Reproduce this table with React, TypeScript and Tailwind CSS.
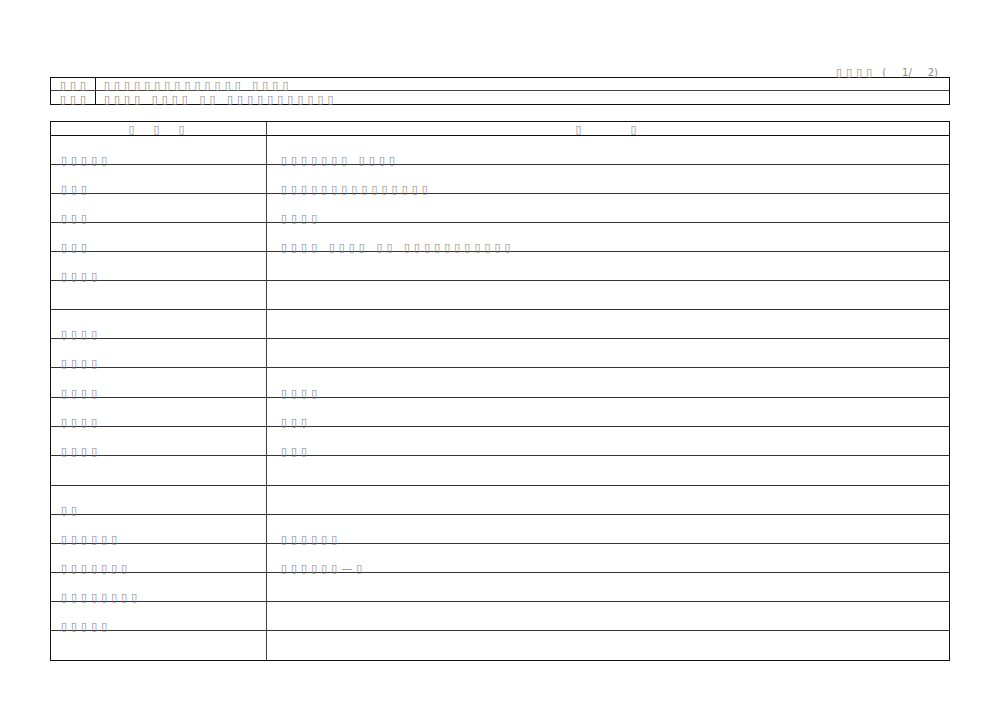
import React from "react";

// tofu-like text, as the original document renders
const Tf = ({ t, className = "" }: { t: string; className?: string }) => (
  <span
    className={"whitespace-pre text-[11px] leading-none tracking-[4px] text-[#8a8a8a] " + className}
    style={{ fontFamily: '"DejaVu Sans", sans-serif' }}
  >
    {t}
  </span>
);

const rows: { h: string; l: string; r: string }[] = [
  { h: "h-[29px]", l: "▯▯▯▯▯", r: "▯▯▯▯▯▯▯ ▯▯▯▯" },
  { h: "h-[29px]", l: "▯▯▯", r: "▯▯▯▯▯▯▯▯▯▯▯▯▯▯▯" },
  { h: "h-[29px]", l: "▯▯▯", r: "▯▯▯▯" },
  { h: "h-[29px]", l: "▯▯▯", r: "▯▯▯▯ ▯▯▯▯ ▯▯ ▯▯▯▯▯▯▯▯▯▯▯" },
  { h: "h-[29px]", l: "▯▯▯▯", r: "" },
  { h: "h-[29px]", l: "", r: "" },
  { h: "h-[29px]", l: "▯▯▯▯", r: "" },
  { h: "h-[29px]", l: "▯▯▯▯", r: "" },
  { h: "h-[30px]", l: "▯▯▯▯", r: "▯▯▯▯" },
  { h: "h-[29px]", l: "▯▯▯▯", r: "▯▯▯" },
  { h: "h-[29px]", l: "▯▯▯▯", r: "▯▯▯" },
  { h: "h-[30px]", l: "", r: "" },
  { h: "h-[29px]", l: "▯▯", r: "" },
  { h: "h-[29px]", l: "▯▯▯▯▯▯", r: "▯▯▯▯▯▯" },
  { h: "h-[29px]", l: "▯▯▯▯▯▯▯", r: "▯▯▯▯▯▯—▯" },
  { h: "h-[29px]", l: "▯▯▯▯▯▯▯▯", r: "" },
  { h: "h-[29px]", l: "▯▯▯▯▯", r: "" },
  { h: "h-[29px]", l: "", r: "" },
];

export default function App() {
  return (
    <div className="w-[1000px] h-[707px] bg-white relative">
      <div className="pt-[66px] px-[50px]">
        {/* page counter */}
        <div className="flex justify-end pr-[12px] h-[11px] items-end">
          <Tf t="▯▯▯▯" className="-mb-[1px]" />
          <span
            className="whitespace-pre text-[10px] leading-none text-[#8a8a8a] -mb-[1px] ml-[6px]"
            style={{ fontFamily: '"DejaVu Sans", sans-serif' }}
          >
            {"(     1/     2)"}
          </span>
        </div>

        {/* title block */}
        <div className="border border-[#111] w-[900px]">
          <div className="flex h-[13px] border-b border-[#444]">
            <div className="w-[45px] border-r border-[#111] pl-[9px] flex items-end">
              <Tf t="▯▯▯" className="-mb-[1px]" />
            </div>
            <div className="flex-1 pl-[8px] flex items-end">
              <Tf t="▯▯▯▯▯▯▯▯▯▯▯▯▯▯ ▯▯▯▯" className="-mb-[1px]" />
            </div>
          </div>
          <div className="flex h-[13px]">
            <div className="w-[45px] border-r border-[#111] pl-[9px] flex items-end">
              <Tf t="▯▯▯" className="-mb-[1px]" />
            </div>
            <div className="flex-1 pl-[8px] flex items-end">
              <Tf t="▯▯▯▯ ▯▯▯▯ ▯▯ ▯▯▯▯▯▯▯▯▯▯▯" className="-mb-[1px]" />
            </div>
          </div>
        </div>

        {/* main table */}
        <div className="mt-[16px] border border-[#111] w-[900px]">
          <div className="flex h-[14px] border-b border-[#111]">
            <div className="w-[216px] border-r border-[#444] flex items-end justify-center">
              <Tf t="▯  ▯  ▯" />
            </div>
            <div className="flex-1 flex items-end justify-center">
              <Tf t="▯      ▯" />
            </div>
          </div>
          {rows.map((r, i) => (
            <div
              key={i}
              className={
                "flex " + r.h + (i < rows.length - 1 ? " border-b border-[#333]" : "")
              }
            >
              <div className="w-[216px] border-r border-[#444] pl-[10px] flex items-end">
                <Tf t={r.l} className="-mb-[2px]" />
              </div>
              <div className="flex-1 pl-[14px] flex items-end">
                <Tf t={r.r} className="-mb-[2px]" />
              </div>
            </div>
          ))}
        </div>
      </div>
    </div>
  );
}
